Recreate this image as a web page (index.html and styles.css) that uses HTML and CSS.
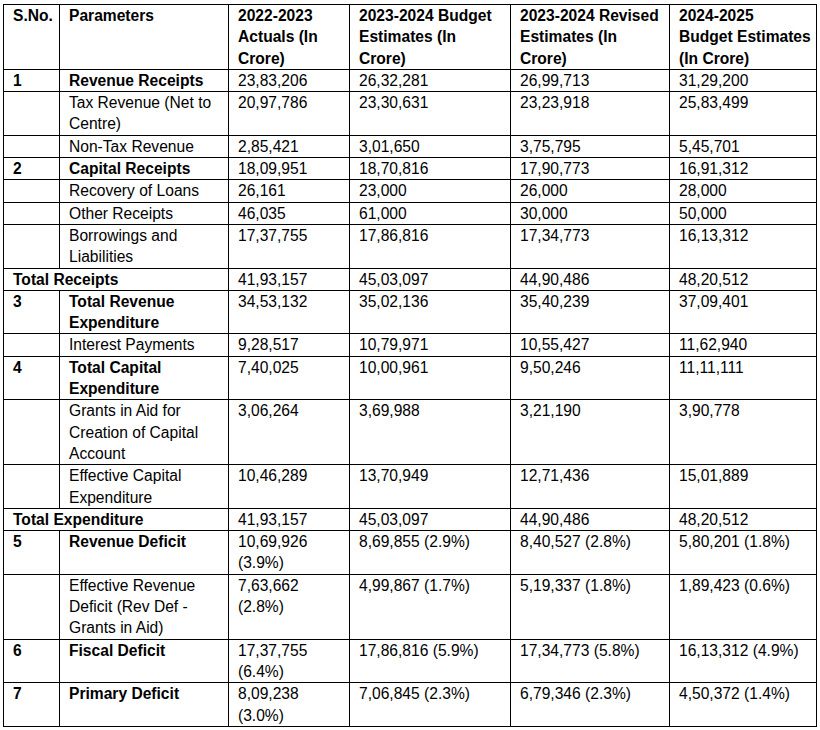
FILE: index.html
```html
<!DOCTYPE html>
<html lang="en">
<head>
<meta charset="utf-8">
<title>Union Budget 2024-2025</title>
<link rel="stylesheet" href="styles.css">
</head>
<body>
<div class="page">
<table class="budget">
  <colgroup>
    <col class="c-sno">
    <col class="c-param">
    <col class="c-a">
    <col class="c-b">
    <col class="c-c">
    <col class="c-d">
  </colgroup>
  <thead>
    <tr>
      <th>S.No.</th>
      <th>Parameters</th>
      <th>2022-2023<br>Actuals (In<br>Crore)</th>
      <th>2023-2024 Budget<br>Estimates (In<br>Crore)</th>
      <th>2023-2024 Revised<br>Estimates (In<br>Crore)</th>
      <th>2024-2025<br>Budget Estimates<br>(In Crore)</th>
    </tr>
  </thead>
  <tbody>
    <tr class="main"><td>1</td><td>Revenue Receipts</td><td>23,83,206</td><td>26,32,281</td><td>26,99,713</td><td>31,29,200</td></tr>
    <tr><td></td><td>Tax Revenue (Net to<br>Centre)</td><td>20,97,786</td><td>23,30,631</td><td>23,23,918</td><td>25,83,499</td></tr>
    <tr><td></td><td>Non-Tax Revenue</td><td>2,85,421</td><td>3,01,650</td><td>3,75,795</td><td>5,45,701</td></tr>
    <tr class="main"><td>2</td><td>Capital Receipts</td><td>18,09,951</td><td>18,70,816</td><td>17,90,773</td><td>16,91,312</td></tr>
    <tr><td></td><td>Recovery of Loans</td><td>26,161</td><td>23,000</td><td>26,000</td><td>28,000</td></tr>
    <tr><td></td><td>Other Receipts</td><td>46,035</td><td>61,000</td><td>30,000</td><td>50,000</td></tr>
    <tr><td></td><td>Borrowings and<br>Liabilities</td><td>17,37,755</td><td>17,86,816</td><td>17,34,773</td><td>16,13,312</td></tr>
    <tr class="total"><td colspan="2">Total Receipts</td><td>41,93,157</td><td>45,03,097</td><td>44,90,486</td><td>48,20,512</td></tr>
    <tr class="main"><td>3</td><td>Total Revenue<br>Expenditure</td><td>34,53,132</td><td>35,02,136</td><td>35,40,239</td><td>37,09,401</td></tr>
    <tr><td></td><td>Interest Payments</td><td>9,28,517</td><td>10,79,971</td><td>10,55,427</td><td>11,62,940</td></tr>
    <tr class="main"><td>4</td><td>Total Capital<br>Expenditure</td><td>7,40,025</td><td>10,00,961</td><td>9,50,246</td><td>11,11,111</td></tr>
    <tr><td></td><td>Grants in Aid for<br>Creation of Capital<br>Account</td><td>3,06,264</td><td>3,69,988</td><td>3,21,190</td><td>3,90,778</td></tr>
    <tr><td></td><td>Effective Capital<br>Expenditure</td><td>10,46,289</td><td>13,70,949</td><td>12,71,436</td><td>15,01,889</td></tr>
    <tr class="total"><td colspan="2">Total Expenditure</td><td>41,93,157</td><td>45,03,097</td><td>44,90,486</td><td>48,20,512</td></tr>
    <tr class="main"><td>5</td><td>Revenue Deficit</td><td>10,69,926<br>(3.9%)</td><td>8,69,855 (2.9%)</td><td>8,40,527 (2.8%)</td><td>5,80,201 (1.8%)</td></tr>
    <tr><td></td><td>Effective Revenue<br>Deficit (Rev Def -<br>Grants in Aid)</td><td>7,63,662<br>(2.8%)</td><td>4,99,867 (1.7%)</td><td>5,19,337 (1.8%)</td><td>1,89,423 (0.6%)</td></tr>
    <tr class="main"><td>6</td><td>Fiscal Deficit</td><td>17,37,755<br>(6.4%)</td><td>17,86,816 (5.9%)</td><td>17,34,773 (5.8%)</td><td>16,13,312 (4.9%)</td></tr>
    <tr class="main"><td>7</td><td>Primary Deficit</td><td>8,09,238<br>(3.0%)</td><td>7,06,845 (2.3%)</td><td>6,79,346 (2.3%)</td><td>4,50,372 (1.4%)</td></tr>
  </tbody>
</table>
</div>
</body>
</html>
```
FILE: styles.css
```css
html, body {
  margin: 0;
  padding: 0;
  background: #ffffff;
}

.page {
  padding: 4px 0 0 3px;
}

.budget {
  border-collapse: collapse;
  table-layout: fixed;
  width: 813px;
  font-family: "Liberation Sans", Arial, sans-serif;
  font-size: 15.6px;
  line-height: 21.3px;
  color: #000;
}

.c-sno { width: 56px; }
.c-param { width: 169px; }
.c-a { width: 121px; }
.c-b { width: 161px; }
.c-c { width: 159px; }
.c-d { width: 147px; }

.budget th,
.budget td {
  border: 1px solid #000;
  padding: 0 3px 0 9px;
  text-align: left;
  vertical-align: top;
}

.budget th {
  font-weight: 700;
}

.budget tr.main td:nth-child(1),
.budget tr.main td:nth-child(2),
.budget tr.total td:nth-child(1) {
  font-weight: 700;
}
```
